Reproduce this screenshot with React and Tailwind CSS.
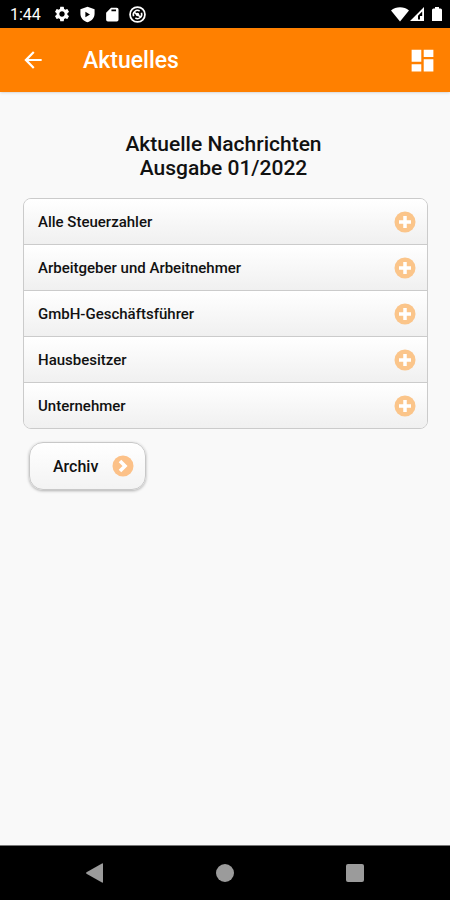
import React, { useState } from "react";
import { MdArrowBack, MdDashboard, MdSettings } from "react-icons/md";

const topics = [
  "Alle Steuerzahler",
  "Arbeitgeber und Arbeitnehmer",
  "GmbH-Geschäftsführer",
  "Hausbesitzer",
  "Unternehmer",
];

const StatusBar = () => (
  <div className="flex h-7 shrink-0 items-center justify-between bg-black pl-[10px] pr-[7px] text-white">
    <div className="flex items-center">
      <span className="w-[43px] pt-0.5 text-base leading-7">1:44</span>
      <div className="flex items-center gap-2">
        <MdSettings size={18} />
        {/* Shield */}
        <svg width="17" height="17" viewBox="0 0 24 24" fill="currentColor">
          <path
            fillRule="evenodd"
            d="M12 1 2 4.500V11c0 6 4.500 10.500 10 12 5.500-1.500 10-6 10-12V4.500zM9 8 15.500 12 9 16z"
          />
        </svg>
        {/* SD card */}
        <svg width="17" height="17" viewBox="0 0 24 24" fill="currentColor">
          <path
            fillRule="evenodd"
            d="M10 2.500h8a2.500 2.500 0 0 1 2.500 2.500v14.500a2.500 2.500 0 0 1-2.500 2.500H5.500A2.500 2.500 0 0 1 3 19.500V9.500zM10.500 5v2.500h6.500V5z"
          />
        </svg>
        {/* Sync ring */}
        <svg width="17" height="17" viewBox="0 0 24 24" fill="none" stroke="currentColor">
          <circle cx="12" cy="12" r="10.500" strokeWidth="2.500" />
          <path d="M6.500 14.500A6 6 0 0 1 15 7M17.500 9.500A6 6 0 0 1 9 17" strokeWidth="2.200" />
          <path d="M7 8.500 17 16" strokeWidth="2.200" />
          <circle cx="12" cy="12" r="2.500" fill="currentColor" stroke="none" />
        </svg>
      </div>
    </div>
    <div className="flex items-center">
      <svg width="18" height="16" viewBox="0 0 18 16" fill="currentColor">
        <path d="M0 4.500C5 .2 13 .2 18 4.500L9 15.500z" />
      </svg>
      <svg width="16" height="16" viewBox="0 0 16 16">
        <path
          fillRule="evenodd"
          fill="currentColor"
          d="M15 1v14H1zM13.200 5.500 9 9.700v3.800h2V10h2.200z"
        />
      </svg>
      <svg className="ml-1.5" width="12" height="16" viewBox="0 0 12 16" fill="currentColor">
        <path d="M4 1h4v1.500h1.500q1.500 0 1.500 1.500v11H1V4q0-1.500 1.500-1.500H4z" />
      </svg>
    </div>
  </div>
);

const Header = () => (
  <header className="relative z-10 flex h-16 shrink-0 items-center bg-[#ff8000] pr-[13px] pl-5 text-white shadow-sm">
    <button type="button" aria-label="Zurück" className="flex w-[63px] items-center">
      <MdArrowBack size={26} />
    </button>
    <h1 className="grow pt-0.5 text-[23px] font-medium leading-7">Aktuelles</h1>
    <button type="button" aria-label="Übersicht">
      <MdDashboard size={29} />
    </button>
  </header>
);

const PlusIcon = () => (
  <svg width="22" height="22" viewBox="0 0 22 22">
    <circle cx="11" cy="11" r="10.500" fill="#fbc58a" />
    <path d="M11 5v12M5 11h12" stroke="#fff" strokeWidth="3.500" />
  </svg>
);

const ArrowIcon = () => (
  <svg width="22" height="22" viewBox="0 0 22 22">
    <circle cx="11" cy="11" r="10.500" fill="#fcc188" />
    <path d="m8 6 5 5-5 5" fill="none" stroke="#fff" strokeWidth="3.600" />
  </svg>
);

const App = () => {
  const [selected, setSelected] = useState(null);

  return (
    <div className="flex min-h-screen flex-col bg-[#f9f9f9] font-[Roboto,sans-serif] text-[#111]">
      <StatusBar />
      <Header />

      <main className="grow pt-10 pr-[22px] pb-6 pl-[23px]">
        <h2 className="mr-1 text-center text-[21px] font-medium leading-6">
          Aktuelle Nachrichten
          <br />
          Ausgabe 01/2022
        </h2>

        <ul className="mt-[18px] overflow-hidden rounded-lg border border-[#cbcbcb]">
          {topics.map((topic, index) => (
            <li key={topic} className="border-b border-[#cbcbcb] last:border-b-0">
              <button
                type="button"
                aria-pressed={selected === index}
                onClick={() => setSelected(index)}
                className="flex h-[45px] w-full items-center justify-between bg-linear-to-b from-white to-[#f0f0f0] pr-[11px] pl-3.5 text-left text-[15px] font-medium"
              >
                <span className="pt-0.5">{topic}</span>
                <PlusIcon />
              </button>
            </li>
          ))}
        </ul>

        <button
          type="button"
          className="mt-[13px] ml-1.5 flex h-12 items-center gap-3.5 rounded-[14px] border border-[#c8c8c8] bg-linear-to-b from-white to-[#f3f3f3] pr-[11px] pl-[23px] text-base font-medium shadow-[0_1px_3px_rgba(0,0,0,0.3)]"
        >
          <span className="pt-0.5">Archiv</span>
          <ArrowIcon />
        </button>
      </main>

      {/* Android navigation */}
      <nav className="grid h-[55px] shrink-0 grid-cols-3 items-center justify-items-center border-t border-[#777] bg-black px-[30px] text-[#9b9b9b]">
        <button type="button" aria-label="Zurück">
          <svg width="20" height="20" viewBox="0 0 20 20" fill="currentColor">
            <path d="M17 .5q1-.5 1 .5v18q0 1-1 .5L1.500 10.700q-1-.7 0-1.400z" />
          </svg>
        </button>
        <button type="button" aria-label="Startseite">
          <svg width="20" height="20" viewBox="0 0 20 20" fill="currentColor">
            <circle cx="10" cy="10" r="9" />
          </svg>
        </button>
        <button type="button" aria-label="Letzte Apps">
          <svg width="20" height="20" viewBox="0 0 20 20" fill="currentColor">
            <rect x="1" y="1" width="18" height="18" rx="2" />
          </svg>
        </button>
      </nav>
    </div>
  );
};

export default App;
